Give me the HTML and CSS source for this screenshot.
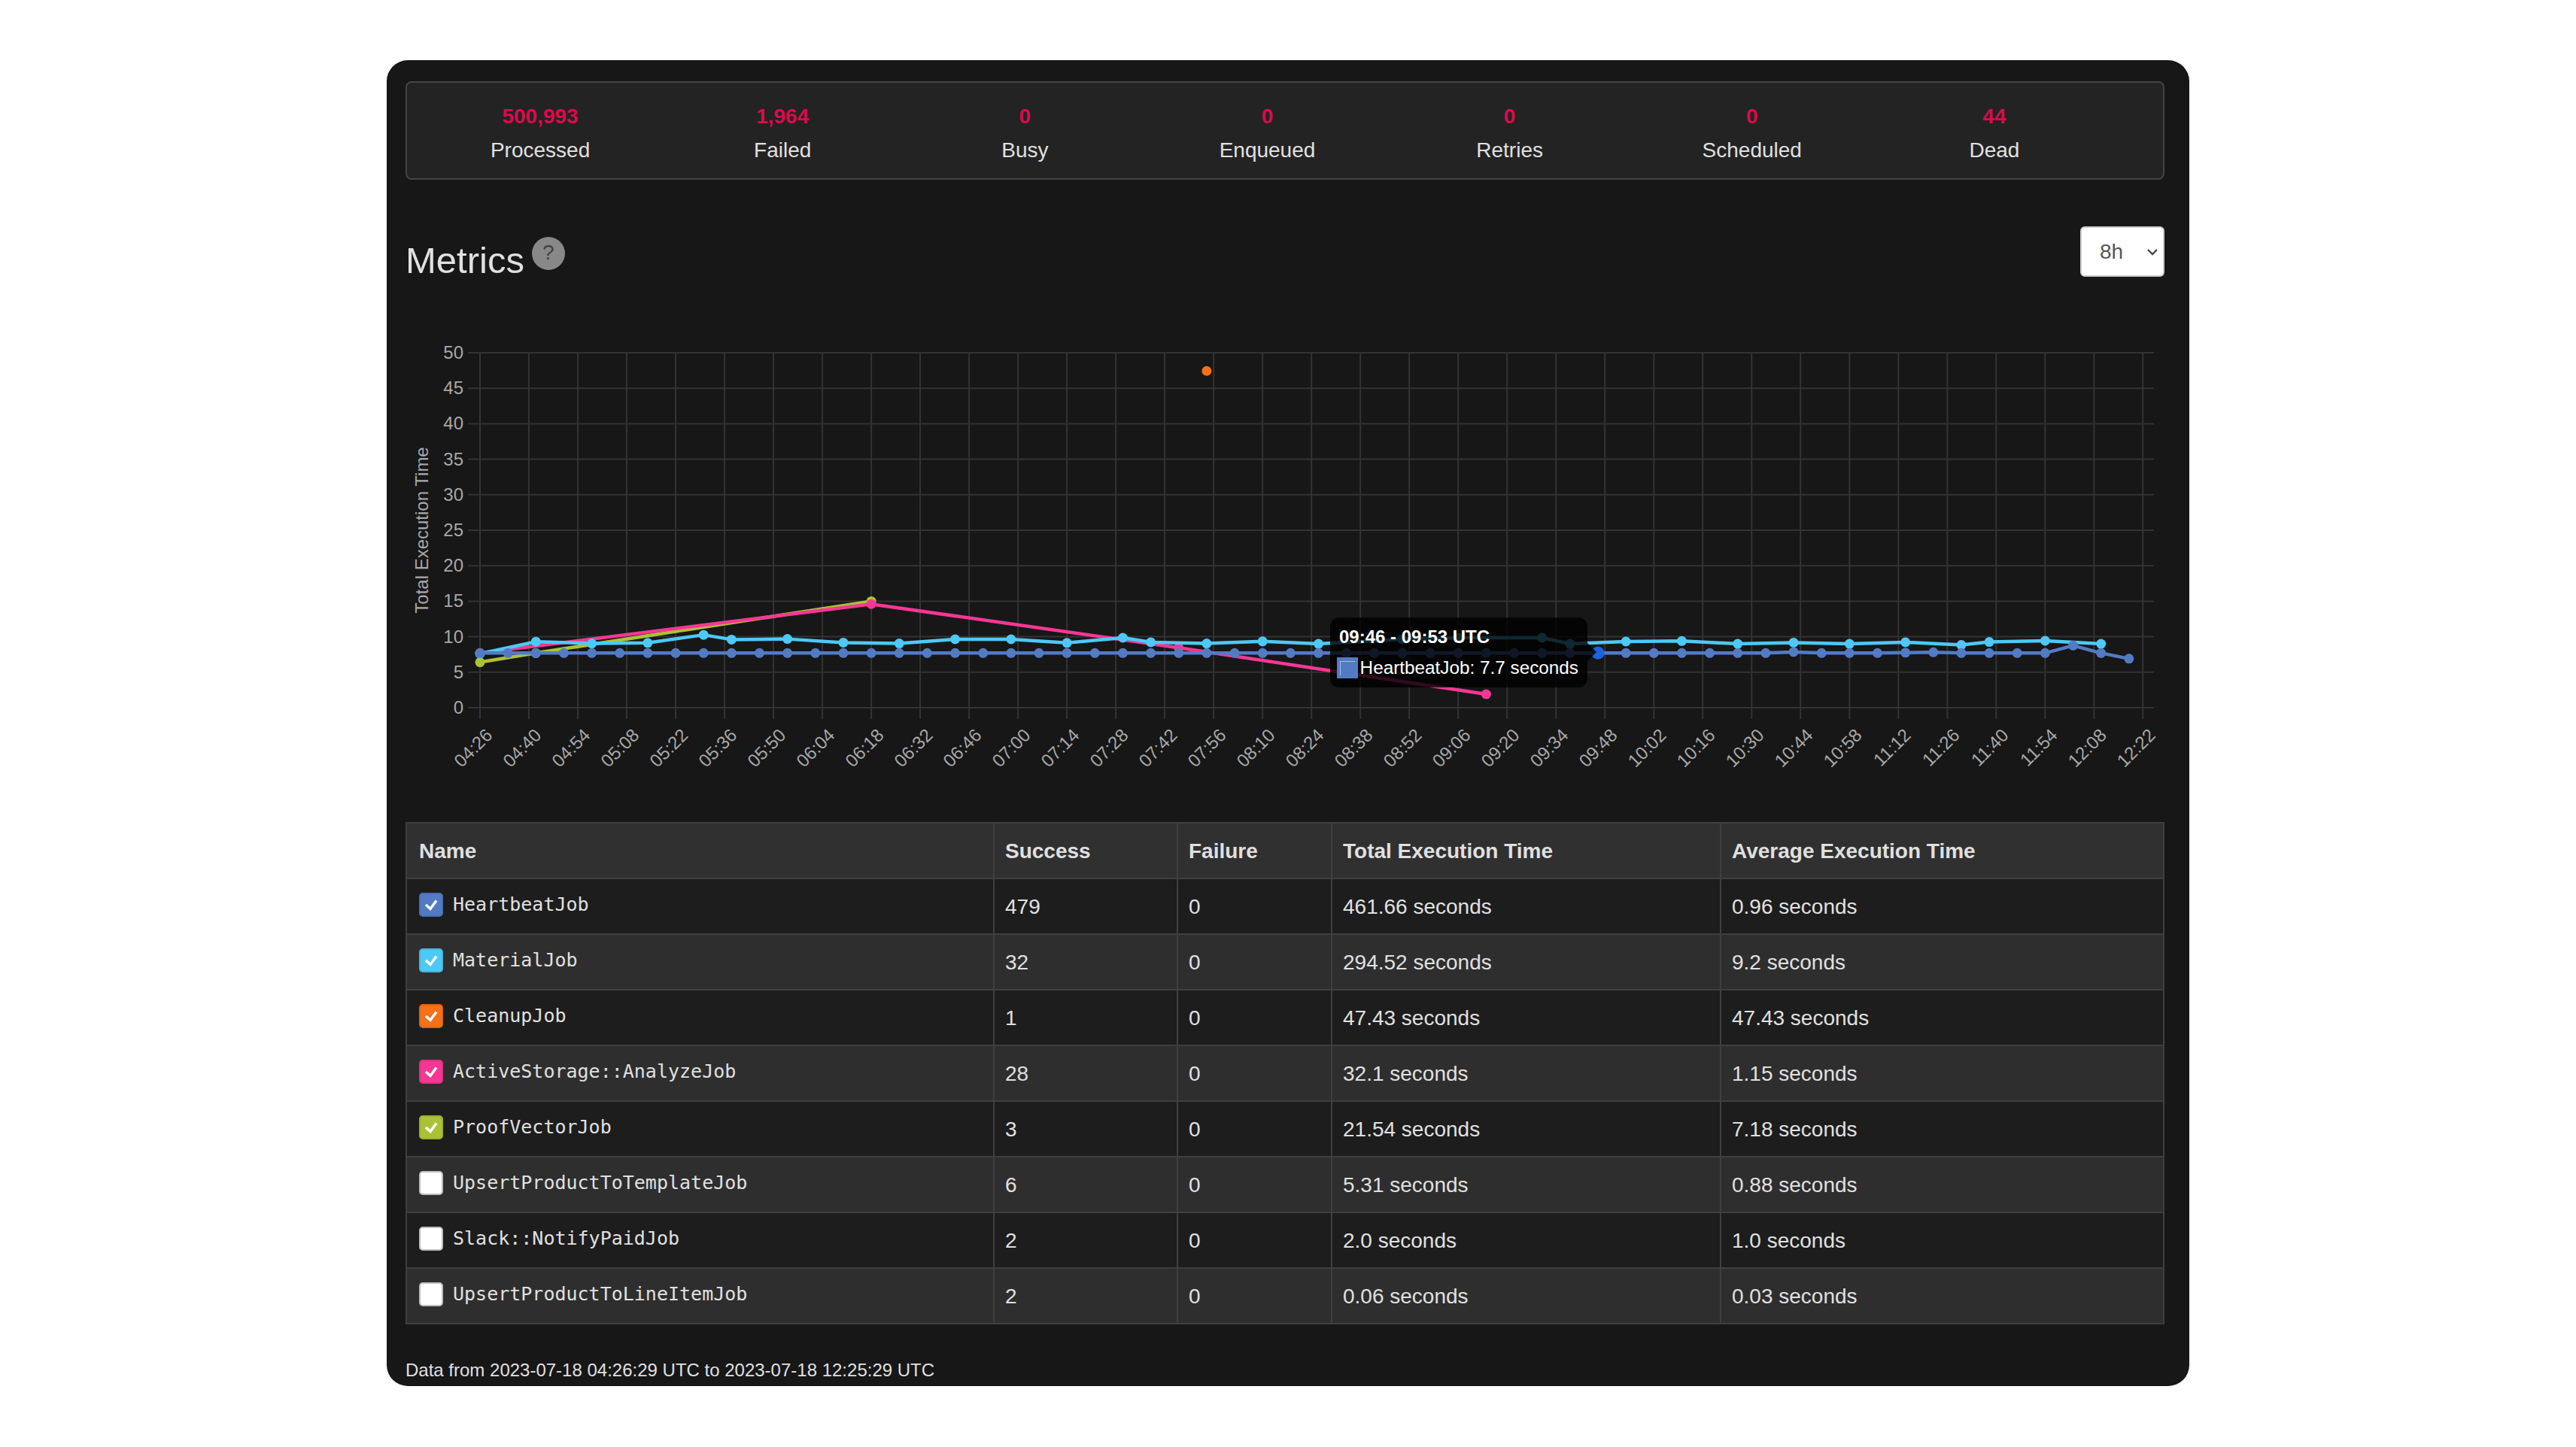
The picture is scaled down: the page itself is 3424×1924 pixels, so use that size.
FILE: index.html
```html
<!DOCTYPE html>
<html lang="en">
  <head>
    <meta charset="UTF-8" />
    <title>Metrics</title>
    <link rel="stylesheet" href="styles.css">
  </head>
  <body>
    <div class="panel">
      <div class="stats">
        <div class="stat"><div class="stat-value">500,993</div><div class="stat-label">Processed</div></div>
        <div class="stat"><div class="stat-value">1,964</div><div class="stat-label">Failed</div></div>
        <div class="stat"><div class="stat-value">0</div><div class="stat-label">Busy</div></div>
        <div class="stat"><div class="stat-value">0</div><div class="stat-label">Enqueued</div></div>
        <div class="stat"><div class="stat-value">0</div><div class="stat-label">Retries</div></div>
        <div class="stat"><div class="stat-value">0</div><div class="stat-label">Scheduled</div></div>
        <div class="stat"><div class="stat-value">44</div><div class="stat-label">Dead</div></div>
      </div>

      <div class="metrics-header">
        <h3 class="metrics-title">Metrics <span class="help">?</span></h3>
        <div class="period">
          <select class="period-select">
            <option>1h</option>
            <option>2h</option>
            <option>4h</option>
            <option selected>8h</option>
          </select>
          <svg class="period-chevron" width="16" height="10" viewBox="0 0 16 10">
            <path d="M2 2l6 6 6-6" fill="none" stroke="#444" stroke-width="2.4" />
          </svg>
        </div>
      </div>

      <div class="chart">
        <svg id="chart" width="2337" height="610"></svg>
        <div class="tooltip">
          <div class="tooltip-title">09:46 - 09:53 UTC</div>
          <div class="tooltip-body"><span class="tooltip-swatch"></span>HeartbeatJob: 7.7 seconds</div>
        </div>
      </div>

      <table class="jobs">
        <thead>
          <tr>
            <th class="col-name">Name</th>
            <th class="col-success">Success</th>
            <th class="col-failure">Failure</th>
            <th class="col-total">Total Execution Time</th>
            <th>Average Execution Time</th>
          </tr>
        </thead>
        <tbody>
          <tr>
            <td><div class="job"><span class="check heartbeat"><svg width="32" height="32" viewBox="0 0 32 32"><path d="M9 16l6 5.5L23 10.5" /></svg></span><code>HeartbeatJob</code></div></td>
            <td>479</td><td>0</td><td>461.66 seconds</td><td>0.96 seconds</td>
          </tr>
          <tr>
            <td><div class="job"><span class="check material"><svg width="32" height="32" viewBox="0 0 32 32"><path d="M9 16l6 5.5L23 10.5" /></svg></span><code>MaterialJob</code></div></td>
            <td>32</td><td>0</td><td>294.52 seconds</td><td>9.2 seconds</td>
          </tr>
          <tr>
            <td><div class="job"><span class="check cleanup"><svg width="32" height="32" viewBox="0 0 32 32"><path d="M9 16l6 5.5L23 10.5" /></svg></span><code>CleanupJob</code></div></td>
            <td>1</td><td>0</td><td>47.43 seconds</td><td>47.43 seconds</td>
          </tr>
          <tr>
            <td><div class="job"><span class="check analyze"><svg width="32" height="32" viewBox="0 0 32 32"><path d="M9 16l6 5.5L23 10.5" /></svg></span><code>ActiveStorage::AnalyzeJob</code></div></td>
            <td>28</td><td>0</td><td>32.1 seconds</td><td>1.15 seconds</td>
          </tr>
          <tr>
            <td><div class="job"><span class="check proof"><svg width="32" height="32" viewBox="0 0 32 32"><path d="M9 16l6 5.5L23 10.5" /></svg></span><code>ProofVectorJob</code></div></td>
            <td>3</td><td>0</td><td>21.54 seconds</td><td>7.18 seconds</td>
          </tr>
          <tr>
            <td><div class="job"><span class="check"></span><code>UpsertProductToTemplateJob</code></div></td>
            <td>6</td><td>0</td><td>5.31 seconds</td><td>0.88 seconds</td>
          </tr>
          <tr>
            <td><div class="job"><span class="check"></span><code>Slack::NotifyPaidJob</code></div></td>
            <td>2</td><td>0</td><td>2.0 seconds</td><td>1.0 seconds</td>
          </tr>
          <tr>
            <td><div class="job"><span class="check"></span><code>UpsertProductToLineItemJob</code></div></td>
            <td>2</td><td>0</td><td>0.06 seconds</td><td>0.03 seconds</td>
          </tr>
        </tbody>
      </table>

      <p class="data-range">Data from 2023-07-18 04:26:29 UTC to 2023-07-18 12:25:29 UTC</p>
    </div>

    <script>
      const svg = document.getElementById("chart");
      const NS = "http://www.w3.org/2000/svg";

      const left = 98;
      const zero = 501;
      const gridStep = 65.01;
      const pointStep = 37.15;
      const unit = 9.44;

      const labels = [
        "04:26", "04:40", "04:54", "05:08", "05:22", "05:36", "05:50", "06:04", "06:18",
        "06:32", "06:46", "07:00", "07:14", "07:28", "07:42", "07:56", "08:10", "08:24",
        "08:38", "08:52", "09:06", "09:20", "09:34", "09:48", "10:02", "10:16", "10:30",
        "10:44", "10:58", "11:12", "11:26", "11:40", "11:54", "12:08", "12:22",
      ];

      function add(name, attrs, text) {
        const el = document.createElementNS(NS, name);
        for (const key in attrs) el.setAttribute(key, attrs[key]);
        if (text) el.textContent = text;
        svg.appendChild(el);
        return el;
      }

      const xAt = (i) => left + i * pointStep;
      const yAt = (v) => zero - v * unit;

      // Grid and axes
      for (let v = 0; v <= 50; v += 5) {
        add("line", { class: "grid", x1: 82, x2: 2323, y1: yAt(v), y2: yAt(v) });
        add("text", { class: "tick tick-y", x: 76, y: yAt(v) + 8 }, String(v));
      }
      labels.forEach((label, i) => {
        const x = left + i * gridStep;
        add("line", { class: "grid", x1: x, x2: x, y1: 29, y2: 516 });
        add("text", { class: "tick tick-x", x: x + 18, y: 539, transform: `rotate(-45 ${x + 18} 539)` }, label);
      });
      add("text", { class: "tick axis-title", x: 0, y: 0, transform: "translate(29 265) rotate(-90)" }, "Total Execution Time");

      // Heartbeat runs on every point, with a few small bumps
      const heartbeat = [];
      for (let i = 0; i < 60; i++) heartbeat.push([i, 7.7]);
      heartbeat[47][1] = 7.85;
      heartbeat[51][1] = 7.75;
      heartbeat[52][1] = 7.8;
      heartbeat[57][1] = 8.76;
      heartbeat[59][1] = 6.9;

      const series = [
        { color: "#acc236", data: [[0, 6.4], [2, 7.7], [14, 15]] },
        { color: "#f53794", data: [[0, 7.7], [14, 14.6], [25, 8.45], [36, 1.9]] },
        { color: "#f67019", data: [[26, 47.43]] },
        {
          color: "#4dc9f6",
          data: [
            [0, 7.6], [2, 9.3], [4, 9.05], [6, 9.13], [8, 10.26], [9, 9.6], [11, 9.68], [13, 9.17],
            [15, 9.05], [17, 9.64], [19, 9.64], [21, 9.13], [23, 9.85], [24, 9.22], [26, 9.05],
            [28, 9.34], [30, 9.0], [33, 9.64], [35, 9.85], [38, 9.85], [39, 9.0], [41, 9.32],
            [43, 9.39], [45, 9.0], [47, 9.17], [49, 9.0], [51, 9.22], [53, 8.84], [54, 9.26],
            [56, 9.43], [58, 9.0],
          ],
        },
        { color: "#537bc4", data: heartbeat },
      ];

      series.forEach((s) => {
        const points = s.data.map(([i, v]) => `${xAt(i)},${yAt(v)}`).join(" ");
        add("polyline", { class: "series", points: points, stroke: s.color });
        s.data.forEach(([i, v]) => {
          add("circle", { cx: xAt(i), cy: yAt(v), r: 6.5, fill: s.color });
        });
      });

      // Hovered point sits under the tooltip caret
      add("circle", { cx: xAt(40), cy: yAt(7.7), r: 8.5, fill: "#1f62e0" });
    </script>
  </body>
</html>
```

FILE: styles.css
```css
* {
  box-sizing: border-box;
}
body {
  margin: 0;
  background-color: #ffffff;
  font-family: "Liberation Sans", Arial, sans-serif;
  color: #e0e0e0;
}
.panel {
  width: 2396px;
  height: 1763px;
  margin: 80px auto 0;
  padding: 28px 33px 0 25px;
  background-color: #171717;
  border-radius: 28px;
  overflow: hidden;
}

/* stats box */
.stats {
  display: flex;
  height: 131px;
  padding: 24px 63px 0 16px;
  background-color: #232323;
  border: 2px solid #444444;
  border-radius: 8px;
}
.stat {
  flex: 1;
  text-align: center;
}
.stat-value {
  font-size: 28px;
  line-height: 42px;
  font-weight: bold;
  color: #dc0a4c;
}
.stat-label {
  margin-top: 3px;
  font-size: 28px;
  line-height: 42px;
}

/* heading row */
.metrics-header {
  display: flex;
  justify-content: space-between;
  align-items: flex-start;
  height: 77px;
  margin-top: 62px;
}
.metrics-title {
  display: flex;
  align-items: flex-start;
  gap: 12px;
  margin: 12px 0 0;
  font-size: 49px;
  line-height: 67px;
  font-weight: normal;
}
.help {
  width: 44px;
  height: 44px;
  margin-top: 2px;
  margin-left: -2px;
  border-radius: 50%;
  background-color: #888888;
  color: #3f3f3f;
  font-size: 28px;
  line-height: 42px;
  text-align: center;
}
.period {
  position: relative;
  width: 112px;
  height: 67px;
}
.period-select {
  width: 100%;
  height: 100%;
  padding: 0 0 0 24px;
  appearance: none;
  background-color: #ffffff;
  border: 2px solid #cccccc;
  border-radius: 6px;
  font-family: "Liberation Sans", Arial, sans-serif;
  font-size: 28px;
  color: #555555;
}
.period-chevron {
  position: absolute;
  top: 29px;
  right: 8px;
}

/* chart */
.chart {
  position: relative;
  height: 610px;
  margin: 62px 0 0 1px;
}
#chart {
  display: block;
}
.grid {
  stroke: #333333;
  stroke-width: 2;
}
.tick {
  font-family: "Liberation Sans", Arial, sans-serif;
  font-size: 24px;
  fill: #a8a8a8;
}
.tick-y {
  text-anchor: end;
}
.tick-x {
  text-anchor: end;
}
.axis-title {
  text-anchor: middle;
}
.series {
  fill: none;
  stroke-width: 4.5;
  stroke-linejoin: round;
}
.tooltip {
  position: absolute;
  left: 1228px;
  top: 381px;
  width: 342px;
  height: 93px;
  padding: 12px 12px 12px 9px;
  background-color: rgba(0, 0, 0, 0.8);
  border-radius: 12px;
  color: #ffffff;
  font-size: 24px;
  line-height: 28px;
}
.tooltip::after {
  content: "";
  position: absolute;
  left: 100%;
  top: 34px;
  border-top: 12px solid transparent;
  border-bottom: 12px solid transparent;
  border-left: 12px solid rgba(0, 0, 0, 0.8);
}
.tooltip-title {
  margin: 0 0 13px 3px;
  font-weight: bold;
}
.tooltip-body {
  display: flex;
  gap: 3px;
  font-size: 24.3px;
  white-space: nowrap;
}
.tooltip-swatch {
  position: relative;
  width: 28px;
  height: 28px;
  background-color: #537bc4;
}
.tooltip-swatch::before {
  content: "";
  position: absolute;
  top: 5px;
  left: 4px;
  right: 4px;
  bottom: 4px;
  border-top: 1px solid #a9bde6;
  border-left: 1px solid #a9bde6;
}

/* jobs table */
.jobs {
  width: 2338px;
  margin-top: 43px;
  border-collapse: collapse;
  table-layout: fixed;
  font-size: 28px;
}
.jobs th,
.jobs td {
  height: 74px;
  padding: 2px 16px 0;
  border: 2px solid #3f3f3f;
  text-align: left;
}
.jobs th + th,
.jobs td + td {
  padding-left: 14px;
}
.jobs th {
  background-color: #303030;
}
.jobs tbody tr:nth-child(odd) {
  background-color: #1d1d1d;
}
.jobs tbody tr:nth-child(even) {
  background-color: #2e2e2e;
}
.col-name {
  width: 781px;
}
.col-success {
  width: 244px;
}
.col-failure {
  width: 205px;
}
.col-total {
  width: 517px;
}
.job {
  display: flex;
  align-items: center;
  gap: 13px;
  margin-top: -7px;
}
.job code {
  font-family: "DejaVu Sans Mono", "Liberation Mono", monospace;
  font-size: 25px;
}
.check {
  display: block;
  width: 32px;
  height: 32px;
  background-color: #ffffff;
  border: 2px solid #bdbdbd;
  border-radius: 5px;
}
.check svg {
  display: block;
  margin: -2px;
  fill: none;
  stroke: #ffffff;
  stroke-width: 3.5;
}
.check.heartbeat {
  background-color: #537bc4;
  border-color: #4a6fb2;
}
.check.material {
  background-color: #4dc9f6;
  border-color: #45b5dd;
}
.check.cleanup {
  background-color: #f67019;
  border-color: #dd6516;
}
.check.analyze {
  background-color: #f53794;
  border-color: #dd3285;
}
.check.proof {
  background-color: #acc236;
  border-color: #9baf31;
}
.data-range {
  margin: 45px 0 0;
  font-size: 24px;
  line-height: 32px;
}
```
